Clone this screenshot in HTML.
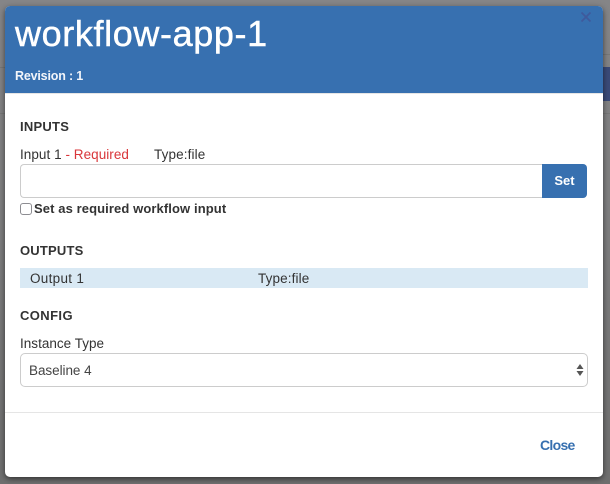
<!DOCTYPE html>
<html><head><meta charset="utf-8"><style>
html,body{margin:0;padding:0}
body{width:610px;height:484px;overflow:hidden;position:relative;background:linear-gradient(#858587 0,#7f7f80 200px,#6f6f6f 484px);font-family:"Liberation Sans",sans-serif;color:#333}
.a{position:absolute;white-space:nowrap}
.t{font-size:13px;line-height:16px}
.n{font-size:13.5px;line-height:16px}
.b{font-weight:bold}
</style></head><body>
<div class="a" style="left:0;top:67px;width:5px;height:1px;background:#777"></div>
<div class="a" style="left:0;top:113px;width:5px;height:1px;background:#777"></div>
<div class="a" style="left:603px;top:67px;width:7px;height:34px;background:#3a4a78"></div>
<div class="a" style="left:603px;top:54px;width:7px;height:1px;background:#777"></div>
<div class="a" style="left:603px;top:113px;width:7px;height:1px;background:#777"></div>
<div class="a" style="left:5px;top:6px;width:598px;height:471px;background:#fff;border-radius:5px;box-shadow:0 2px 6px rgba(0,0,0,.55)"></div>
<div class="a" style="left:5px;top:6px;width:598px;height:87px;background:#3770b0;border-radius:5px 5px 0 0;border-bottom:1px solid #e5e5e5"></div>
<svg class="a" style="left:580px;top:11px" width="13" height="13" viewBox="0 0 13 13"><path d="M1.5 1.5L10.5 10.5M10.5 1.5L1.5 10.5" stroke="#3f5a9c" stroke-width="1.7" fill="none"/></svg>
<div class="a" style="left:15px;top:13px;font-size:36px;line-height:42px;color:#fff;letter-spacing:.62px;-webkit-text-stroke:.45px #fff">workflow-app-1</div>
<div class="a b" style="left:15px;top:68px;font-size:12.5px;line-height:16px;color:#f2f5fa;letter-spacing:-.18px">Revision : 1</div>
<div class="a t b" style="left:20px;top:119px;letter-spacing:.25px">INPUTS</div>
<div class="a n" style="left:20px;top:147px;letter-spacing:.05px">Input 1 <span style="color:#d9363a">- Required</span></div>
<div class="a n" style="left:154px;top:147px;letter-spacing:.12px">Type:file</div>
<div class="a" style="left:20px;top:164px;width:522px;height:32px;border:1px solid #ccc;border-right:0;border-radius:4px 0 0 4px;background:#fff"></div>
<div class="a b" style="left:542px;top:164px;width:45px;height:34px;background:#3770b0;border-radius:0 4px 4px 0;color:#fff;font-size:13px;line-height:34px;text-align:center">Set</div>
<div class="a" style="left:20px;top:203px;width:10px;height:10px;border:1px solid #8d8d92;border-radius:3px;background:#fff"></div>
<div class="a t b" style="left:34px;top:201px;letter-spacing:.1px">Set as required workflow input</div>
<div class="a t b" style="left:20px;top:243px;letter-spacing:.2px">OUTPUTS</div>
<div class="a" style="left:20px;top:268px;width:568px;height:20px;background:#d9e9f4"></div>
<div class="a n" style="left:30px;top:271px;letter-spacing:.3px">Output 1</div>
<div class="a n" style="left:258px;top:271px;letter-spacing:.12px">Type:file</div>
<div class="a t b" style="left:20px;top:308px;letter-spacing:.4px">CONFIG</div>
<div class="a n" style="left:20px;top:336px;letter-spacing:.02px">Instance Type</div>
<div class="a" style="left:20px;top:353px;width:566px;height:32px;border:1px solid #ccc;border-radius:5px;background:#fff"></div>
<div class="a n" style="left:29px;top:363px;color:#444;letter-spacing:-.05px">Baseline 4</div>
<svg class="a" style="left:576px;top:363px" width="8" height="14" viewBox="0 0 8 14"><path d="M4 1L7.5 6H.5ZM4 13L.5 8H7.5Z" fill="#555"/></svg>
<div class="a" style="left:5px;top:412px;width:598px;height:1px;background:#e5e5e5"></div>
<div class="a b" style="left:540px;top:437px;font-size:14px;line-height:16px;color:#3770b0;letter-spacing:-.7px">Close</div>
</body></html>
